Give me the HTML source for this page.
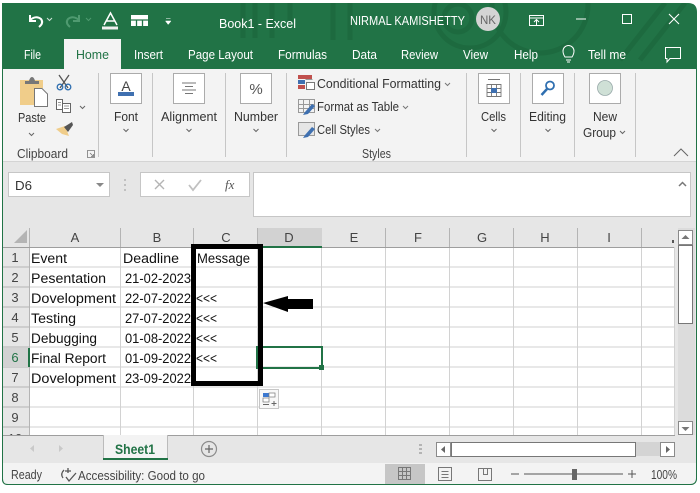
<!DOCTYPE html>
<html><head><meta charset="utf-8"><style>
html,body{margin:0;padding:0;background:#fff;width:700px;height:493px;overflow:hidden}
svg{display:block;font-family:"Liberation Sans",sans-serif}
.r{font-size:13px;fill:#333}
.c{font-size:13.5px;fill:#111}
.w{font-size:13px;fill:#fff}
</style></head><body>
<svg width="700" height="493" viewBox="0 0 700 493" xmlns="http://www.w3.org/2000/svg">
<defs><clipPath id="win"><path d="M2 3H688Q697 3 697 12V478Q697 485 690 485H8Q2 485 2 479Z"/></clipPath></defs>
<rect width="700" height="493" fill="#fff"/>
<g clip-path="url(#win)">
<rect x="2" y="3" width="695" height="482" fill="#217346"/>
<!-- title pattern -->
<g fill="none" stroke="#1d6a3f" stroke-width="5">
<circle cx="470" cy="12" r="36"/><circle cx="458" cy="18" r="14"/><circle cx="540" cy="5" r="48"/>
<path d="M620 60L665 3M640 60L685 3M243 3V38M255 3V38M272 3V38M290 3V25M333 3V40M350 3V40"/>
</g>
<!-- ribbon -->
<rect x="3" y="69" width="693" height="92" fill="#f3f3f3"/>
<rect x="3" y="161" width="693" height="1" fill="#d4d4d4"/>
<rect x="64" y="39" width="57" height="31" fill="#f3f3f3"/>
<!-- formula zone -->
<rect x="3" y="162" width="693" height="273" fill="#e6e6e6"/>
<rect x="8.500" y="172.500" width="101" height="24" fill="#fff" stroke="#c6c6c6"/>
<rect x="140.500" y="172.500" width="109" height="24" fill="#fff" stroke="#c6c6c6"/>
<rect x="253.500" y="172.500" width="437" height="44" fill="#fff" stroke="#c6c6c6"/>
<!-- sheet -->
<rect x="29" y="247" width="645" height="188" fill="#fff"/>
<g stroke="#d2d2d2" stroke-width="1" shape-rendering="crispEdges">
<path d="M29 267H674M29 287H674M29 307H674M29 327H674M29 347H674M29 367H674M29 387H674M29 407H674M29 427H674"/>
<path d="M120.500 247V435M193.500 247V435M257.500 247V435M321.500 247V435M385.500 247V435M449.500 247V435M513.500 247V435M577.500 247V435M641.500 247V435M674.500 247V435"/>
</g>
<g stroke="#b4b4b4" shape-rendering="crispEdges">
<path d="M3 267H29M3 287H29M3 307H29M3 327H29M3 347H29M3 367H29M3 387H29M3 407H29M3 427H29"/>
<path d="M29.500 228V435M120.500 228V247M193.500 228V247M257.500 228V247M321.500 228V247M385.500 228V247M449.500 228V247M513.500 228V247M577.500 228V247M641.500 228V247"/>
</g>
<rect x="3" y="247" width="671" height="1" fill="#9e9e9e"/>
<rect x="258" y="228" width="64" height="19" fill="#d2d2d2"/>
<rect x="258" y="246" width="64" height="2" fill="#217346"/>
<rect x="3" y="348" width="26" height="19" fill="#d2d2d2"/>
<rect x="28" y="348" width="2" height="19" fill="#217346"/>
<path d="M14 243L27 230V243Z" fill="#b4b4b4"/>
<!-- col letters -->
<g text-anchor="middle" style="font-size:13px;fill:#444">
<text x="75" y="242">A</text><text x="157" y="242">B</text><text x="226" y="242">C</text><text x="289" y="242">D</text><text x="354" y="242">E</text><text x="418" y="242">F</text><text x="482" y="242">G</text><text x="545" y="242">H</text><text x="609" y="242">I</text>
</g>
<rect x="672" y="240" width="2" height="3" fill="#555"/>
<g text-anchor="middle" style="font-size:13px;fill:#444">
<text x="15" y="262">1</text><text x="15" y="282">2</text><text x="15" y="302">3</text><text x="15" y="322">4</text><text x="15" y="342">5</text><text x="15" y="362" style="fill:#217346">6</text><text x="15" y="382">7</text><text x="15" y="402">8</text><text x="15" y="422">9</text><text x="15" y="443">10</text>
</g>
<!-- cells -->
<g class="c">
<text x="31" y="263" textLength="36" lengthAdjust="spacingAndGlyphs">Event</text>
<text x="31" y="283" textLength="75" lengthAdjust="spacingAndGlyphs">Pesentation</text>
<text x="31" y="303" textLength="85" lengthAdjust="spacingAndGlyphs">Dovelopment</text>
<text x="31" y="323" textLength="45" lengthAdjust="spacingAndGlyphs">Testing</text>
<text x="31" y="343" textLength="66" lengthAdjust="spacingAndGlyphs">Debugging</text>
<text x="31" y="363" textLength="75" lengthAdjust="spacingAndGlyphs">Final Report</text>
<text x="31" y="383" textLength="85" lengthAdjust="spacingAndGlyphs">Dovelopment</text>
<text x="123" y="263" textLength="56" lengthAdjust="spacingAndGlyphs">Deadline</text>
<text x="125" y="283" textLength="66" lengthAdjust="spacingAndGlyphs">21-02-2023</text>
<text x="125" y="303" textLength="66" lengthAdjust="spacingAndGlyphs">22-07-2022</text>
<text x="125" y="323" textLength="66" lengthAdjust="spacingAndGlyphs">27-07-2022</text>
<text x="125" y="343" textLength="66" lengthAdjust="spacingAndGlyphs">01-08-2022</text>
<text x="125" y="363" textLength="66" lengthAdjust="spacingAndGlyphs">01-09-2022</text>
<text x="125" y="383" textLength="66" lengthAdjust="spacingAndGlyphs">23-09-2022</text>
<text x="197" y="263" textLength="53" lengthAdjust="spacingAndGlyphs">Message</text>
<text x="196" y="303" textLength="21" lengthAdjust="spacingAndGlyphs">&lt;&lt;&lt;</text>
<text x="196" y="323" textLength="21" lengthAdjust="spacingAndGlyphs">&lt;&lt;&lt;</text>
<text x="196" y="343" textLength="21" lengthAdjust="spacingAndGlyphs">&lt;&lt;&lt;</text>
<text x="196" y="363" textLength="21" lengthAdjust="spacingAndGlyphs">&lt;&lt;&lt;</text>
</g>
<!-- active cell -->
<rect x="257" y="347" width="65" height="21" fill="none" stroke="#217346" stroke-width="2"/>
<rect x="319" y="365" width="5" height="5" fill="#217346"/>
<!-- black box and arrow -->
<rect x="193.500" y="246.500" width="67" height="137" fill="none" stroke="#000" stroke-width="5"/>
<path d="M263 303L288 296V299H313V309H288V312Z" fill="#000"/>
<!-- paste options -->
<rect x="259.500" y="389.500" width="19" height="19" fill="#f8f8f8" stroke="#c6c6c6"/>
<rect x="263" y="393" width="6" height="4" fill="#3b78d0"/><rect x="269" y="393" width="6" height="4" fill="#fff" stroke="#777" stroke-width=".7"/>
<rect x="263" y="398" width="6" height="4" fill="#fff" stroke="#777" stroke-width=".7"/>
<path d="M263 404.500H269M274 401V406M271.500 403.500H276.500" stroke="#666" fill="none"/>
<!-- scrollbar -->
<rect x="678" y="228" width="17" height="207" fill="#dcdcdc"/>
<rect x="678.500" y="230.500" width="14" height="14" fill="#fff" stroke="#8a8a8a"/>
<path d="M681.500 239L685.500 235L689.500 239Z" fill="#777"/>
<rect x="678.500" y="245.500" width="14" height="78" fill="#fff" stroke="#777"/>
<rect x="678.500" y="421.500" width="14" height="13" fill="#fff" stroke="#8a8a8a"/>
<path d="M681.500 427H689.500L685.500 431Z" fill="#777"/>
<!-- tab bar -->
<rect x="3" y="435" width="693" height="28" fill="#e6e6e6"/>
<rect x="3" y="435" width="672" height="1" fill="#9e9e9e"/>
<rect x="103" y="435" width="65" height="25" fill="#f3f3f3"/>
<path d="M103.500 435V460M167.500 435V460" stroke="#bbb"/>
<rect x="103" y="458" width="65" height="2" fill="#217346"/>
<text x="115" y="454" textLength="40" lengthAdjust="spacingAndGlyphs" style="font-size:14px;font-weight:bold;fill:#217346">Sheet1</text>
<path d="M34 445L30 448.500L34 452ZM59 445L63 448.500L59 452Z" fill="#c9c9c9"/>
<circle cx="209" cy="449" r="7.500" fill="none" stroke="#8c8c8c" stroke-width="1.200"/>
<path d="M209 445V453M205 449H213" stroke="#666" stroke-width="1.200"/>
<g fill="#b4b4b4"><rect x="419" y="444" width="3" height="2"/><rect x="419" y="448" width="3" height="2"/><rect x="419" y="452" width="3" height="2"/></g>
<rect x="636" y="442" width="24" height="14" fill="#d4d4d4"/>
<rect x="436.500" y="442.500" width="14" height="14" fill="#fff" stroke="#8a8a8a"/>
<path d="M445 446V453L441 449.500Z" fill="#666"/>
<rect x="451.500" y="442.500" width="184" height="14" fill="#fff" stroke="#777"/>
<rect x="660.500" y="442.500" width="14" height="14" fill="#fff" stroke="#8a8a8a"/>
<path d="M666 446V453L670 449.500Z" fill="#666"/>
<!-- status -->
<rect x="3" y="463" width="693" height="21" fill="#f3f3f3"/>
<rect x="385" y="464" width="40" height="20" fill="#c6c6c6"/>
<g fill="none" stroke="#777" shape-rendering="crispEdges">
<path d="M398.500 467.500H410.500V479.500H398.500ZM402.500 467.500V479.500M406.500 467.500V479.500M398.500 471.500H410.500M398.500 475.500H410.500"/>
<path d="M438.500 467.500H451.500V480.500H438.500ZM441.500 471.500H448.500M441.500 474.500H448.500M441.500 477.500H448.500"/>
<path d="M478.500 468.500H491.500V480.500H478.500ZM483.500 468.500V474.500H487.500V468.500"/>
</g>
<path d="M511 474H519M524 474H623M628 474H636M632 470V478" stroke="#555" fill="none"/>
<rect x="572" y="469" width="5" height="11" fill="#666"/>
<text x="651" y="479" textLength="26" lengthAdjust="spacingAndGlyphs" style="font-size:13px;fill:#444">100%</text>
<text x="11" y="479" textLength="31" lengthAdjust="spacingAndGlyphs" style="font-size:13px;fill:#444">Ready</text>
<text x="78" y="480" textLength="127" lengthAdjust="spacingAndGlyphs" style="font-size:13px;fill:#444">Accessibility: Good to go</text>
<path d="M64 470Q60 474 63 478M68 468V473M65 471H71M66 477L69 481L76 473" stroke="#555" fill="none" stroke-width="1.300"/>
<!-- title bar text -->
<path d="M30 20Q36 15 41 19Q44 23 39 27M30 15V21H36" fill="none" stroke="#fff" stroke-width="2"/>
<path d="M47 18L49.500 20.500L52 18" fill="none" stroke="#cfe3d7"/>
<path d="M79 20Q73 15 68 19Q65 23 70 27M79 15V21H73" fill="none" stroke="#4f9a70" stroke-width="2"/>
<path d="M86 18L88.500 20.500L91 18" fill="none" stroke="#4f9a70"/>
<path d="M104 25L110.500 13L117 25M106.500 21H114.500" fill="none" stroke="#fff" stroke-width="1.500"/>
<rect x="102" y="26.500" width="16" height="3" fill="#f0f0f0"/>
<path d="M131 15H148V26H131Z" fill="#fff"/>
<path d="M131 20H148M136.500 20V26M142.500 20V26" stroke="#217346" stroke-width="1.300" fill="none"/>
<path d="M166 18.500H170.500M165.500 21H171L168.200 24.500Z" fill="#fff" stroke="#fff" stroke-width=".5"/>
<text x="219" y="28" textLength="77" lengthAdjust="spacingAndGlyphs" class="w">Book1  -  Excel</text>
<text x="350" y="25" textLength="115" lengthAdjust="spacingAndGlyphs" class="w">NIRMAL KAMISHETTY</text>
<circle cx="488" cy="19" r="12" fill="#d4d4d4"/>
<text x="488" y="24" text-anchor="middle" style="font-size:11.500px;fill:#666">NK</text>
<path d="M529.500 15.500H543.500V25.500H529.500ZM529.500 18H543.500M536.500 25V20M534 22L536.500 19.500L539 22" fill="none" stroke="#fff"/>
<path d="M576 19H586" stroke="#fff"/>
<rect x="622.500" y="14.500" width="9" height="9" fill="none" stroke="#fff"/>
<path d="M669 14L679 24M679 14L669 24" stroke="#fff" stroke-width="1.100"/>
<!-- tabs -->
<g class="w">
<text x="24" y="59" textLength="17" lengthAdjust="spacingAndGlyphs">File</text>
<text x="134" y="59" textLength="29" lengthAdjust="spacingAndGlyphs">Insert</text>
<text x="188" y="59" textLength="65" lengthAdjust="spacingAndGlyphs">Page Layout</text>
<text x="278" y="59" textLength="49" lengthAdjust="spacingAndGlyphs">Formulas</text>
<text x="352" y="59" textLength="25" lengthAdjust="spacingAndGlyphs">Data</text>
<text x="401" y="59" textLength="37" lengthAdjust="spacingAndGlyphs">Review</text>
<text x="463" y="59" textLength="25" lengthAdjust="spacingAndGlyphs">View</text>
<text x="514" y="59" textLength="24" lengthAdjust="spacingAndGlyphs">Help</text>
<text x="588" y="59" textLength="38" lengthAdjust="spacingAndGlyphs">Tell me</text>
</g>
<text x="76" y="59" textLength="33" lengthAdjust="spacingAndGlyphs" style="font-size:13px;fill:#217346">Home</text>
<path d="M565 57Q563 54 563 51A5.500 5.500 0 1 1 574 51Q574 54 572 57ZM566 60H571M567 62H570" fill="none" stroke="#fff"/>
<path d="M665.500 47.500H680.500V58.500H670L667 62V58.500H665.500Z" fill="none" stroke="#fff"/>
<!-- group separators -->
<g stroke="#c6c6c6" shape-rendering="crispEdges">
<path d="M98.500 73V157M152.500 73V157M225.500 73V157M286.500 73V157M466.500 73V157M520.500 73V157M574.500 73V157M635.500 73V157"/>
</g>
<!-- clipboard -->
<path d="M20 80H43V88H34V105H20Z" fill="#f0cd8a"/>
<path d="M25 84V81H29Q30 77 32 77Q34 77 35 81H39V84Z" fill="#777"/>
<path d="M34.500 88.500H42L47.500 94V106.500H34.500Z" fill="#fff" stroke="#777"/>
<path d="M59 75L68 88M69 75L60 88" stroke="#555" stroke-width="1.300"/>
<circle cx="60" cy="87" r="2.800" fill="none" stroke="#2f6fb0" stroke-width="1.300"/><circle cx="68" cy="87" r="2.800" fill="none" stroke="#2f6fb0" stroke-width="1.300"/>
<path d="M56.500 99.500H62.500V109.500H56.500ZM62.500 103.500H70.500V112.500H62.500Z" fill="#fff" stroke="#666"/>
<path d="M58 102.500H61M58 105H61M64 106H69M64 108.500H69" stroke="#777" fill="none" stroke-width=".8"/>
<path d="M80 106L82.500 108.500L85 106M29 133L31.500 135.500L34 133" fill="none" stroke="#666"/>
<path d="M56 129L65 126L69 136L62 134Z" fill="#f0cd8a"/><path d="M64 127L72 122L73 125L68 132Z" fill="#555"/>
<text x="18" y="122" textLength="28" lengthAdjust="spacingAndGlyphs" class="r">Paste</text>
<text x="17" y="158" textLength="51" lengthAdjust="spacingAndGlyphs" style="font-size:12.500px;fill:#444">Clipboard</text>
<path d="M87.500 150.500H94.500V157.500H87.500ZM90 153L93.500 156.500M93.500 154V156.500H91" fill="none" stroke="#777" stroke-width=".8"/>
<!-- collapsed buttons -->
<g fill="#fff" stroke="#ababab" shape-rendering="crispEdges">
<rect x="110.500" y="73.500" width="31" height="30"/>
<rect x="173.500" y="73.500" width="31" height="30"/>
<rect x="240.500" y="73.500" width="31" height="30"/>
<rect x="478.500" y="73.500" width="31" height="30"/>
<rect x="532.500" y="73.500" width="31" height="30"/>
<rect x="589.500" y="73.500" width="31" height="30"/>
</g>
<text x="126" y="91" text-anchor="middle" style="font-size:14px;fill:#444">A</text>
<rect x="118" y="92" width="16" height="4" fill="#3f70b0"/>
<path d="M182 83H196M185 86.500H193M182 90H196M185 93.500H193" stroke="#777"/>
<text x="256" y="94" text-anchor="middle" style="font-size:15px;fill:#555">%</text>
<g fill="none" stroke="#777" stroke-width=".9"><path d="M487 84.500H501V96.500H487ZM487 88.500H501M487 92.500H501M491.500 84.500V96.500M496.500 84.500V96.500M488 79.500H500"/></g>
<rect x="491" y="88" width="6" height="5" fill="#3f70b0"/>
<circle cx="550" cy="85.500" r="4" fill="none" stroke="#2f6fb0" stroke-width="1.800"/>
<path d="M547 89L541.500 95" stroke="#2f6fb0" stroke-width="2.500"/>
<circle cx="605" cy="88" r="7.500" fill="#cfe0d6" stroke="#9aa" stroke-width=".8"/>
<g class="r">
<text x="114" y="121" textLength="24" lengthAdjust="spacingAndGlyphs">Font</text>
<text x="161" y="121" textLength="56" lengthAdjust="spacingAndGlyphs">Alignment</text>
<text x="234" y="121" textLength="44" lengthAdjust="spacingAndGlyphs">Number</text>
<text x="481" y="121" textLength="25" lengthAdjust="spacingAndGlyphs">Cells</text>
<text x="529" y="121" textLength="37" lengthAdjust="spacingAndGlyphs">Editing</text>
<text x="593" y="121" textLength="24" lengthAdjust="spacingAndGlyphs">New</text>
<text x="583" y="137" textLength="33" lengthAdjust="spacingAndGlyphs">Group</text>
</g>
<path d="M123.500 129L126 131.500L128.500 129M186.500 129L189 131.500L191.500 129M253.500 129L256 131.500L258.500 129M491.500 129L494 131.500L496.500 129M545.500 129L548 131.500L550.500 129M620 131L622.500 133.500L625 131" fill="none" stroke="#666"/>
<!-- styles -->
<g fill="none" shape-rendering="crispEdges">
<rect x="298" y="75" width="14" height="4" fill="#c0504d"/><rect x="298" y="80" width="7" height="4" fill="#3f70b0"/><rect x="298" y="85" width="7" height="4" fill="#c0504d"/>
<path d="M305.500 79.500H312.500" stroke="#999"/>
<rect x="306.500" y="82.500" width="8" height="7" fill="#fff" stroke="#777"/>
<path d="M298.500 99.500H314.500V112.500H298.500ZM298.500 104.500H314.500M298.500 108.500H314.500M303.500 99.500V112.500M309.500 99.500V112.500" stroke="#999"/>
<path d="M298.500 122.500H314.500V135.500H298.500Z" stroke="#999" fill="#e6e6e6"/>
</g>
<path d="M305 112L312 104L315 106L308 114L303 115Z" fill="#3f70b0"/>
<path d="M305 135L312 127L315 129L308 137L303 138Z" fill="#3f70b0"/>
<g class="r">
<text x="317" y="88" textLength="124" lengthAdjust="spacingAndGlyphs">Conditional Formatting</text>
<text x="317" y="111" textLength="82" lengthAdjust="spacingAndGlyphs">Format as Table</text>
<text x="317" y="134" textLength="53" lengthAdjust="spacingAndGlyphs">Cell Styles</text>
</g>
<path d="M445 83L447.500 85.500L450 83M403 106L405.500 108.500L408 106M375 129L377.500 131.500L380 129" fill="none" stroke="#777"/>
<text x="362" y="158" textLength="29" lengthAdjust="spacingAndGlyphs" style="font-size:12.500px;fill:#444">Styles</text>
<path d="M674 156L681 149L688 156" fill="none" stroke="#666"/>
<!-- formula bar -->
<text x="15" y="190" textLength="17" lengthAdjust="spacingAndGlyphs" style="font-size:13px;fill:#333">D6</text>
<path d="M96 183H104L100 187Z" fill="#888"/>
<g fill="#c0c0c0"><rect x="124" y="179" width="2" height="2"/><rect x="124" y="184" width="2" height="2"/><rect x="124" y="189" width="2" height="2"/></g>
<path d="M155 180L164 189M164 180L155 189" stroke="#b4b4b4" stroke-width="1.400"/>
<path d="M189 185L193 190L201 180" stroke="#c0c0c0" stroke-width="1.800" fill="none"/>
<text x="225" y="189" style="font-family:'Liberation Serif',serif;font-style:italic;font-size:13px;fill:#555">fx</text>
<path d="M679 186L682.500 182.500L686 186" fill="none" stroke="#777" stroke-width="1.500"/>
</g>
<!-- window edge -->
<path d="M2.500 3V479Q2.500 484.500 8 484.500H690Q696.500 484.500 696.500 478V12" fill="none" stroke="#217346"/>
</svg>
</body></html>
